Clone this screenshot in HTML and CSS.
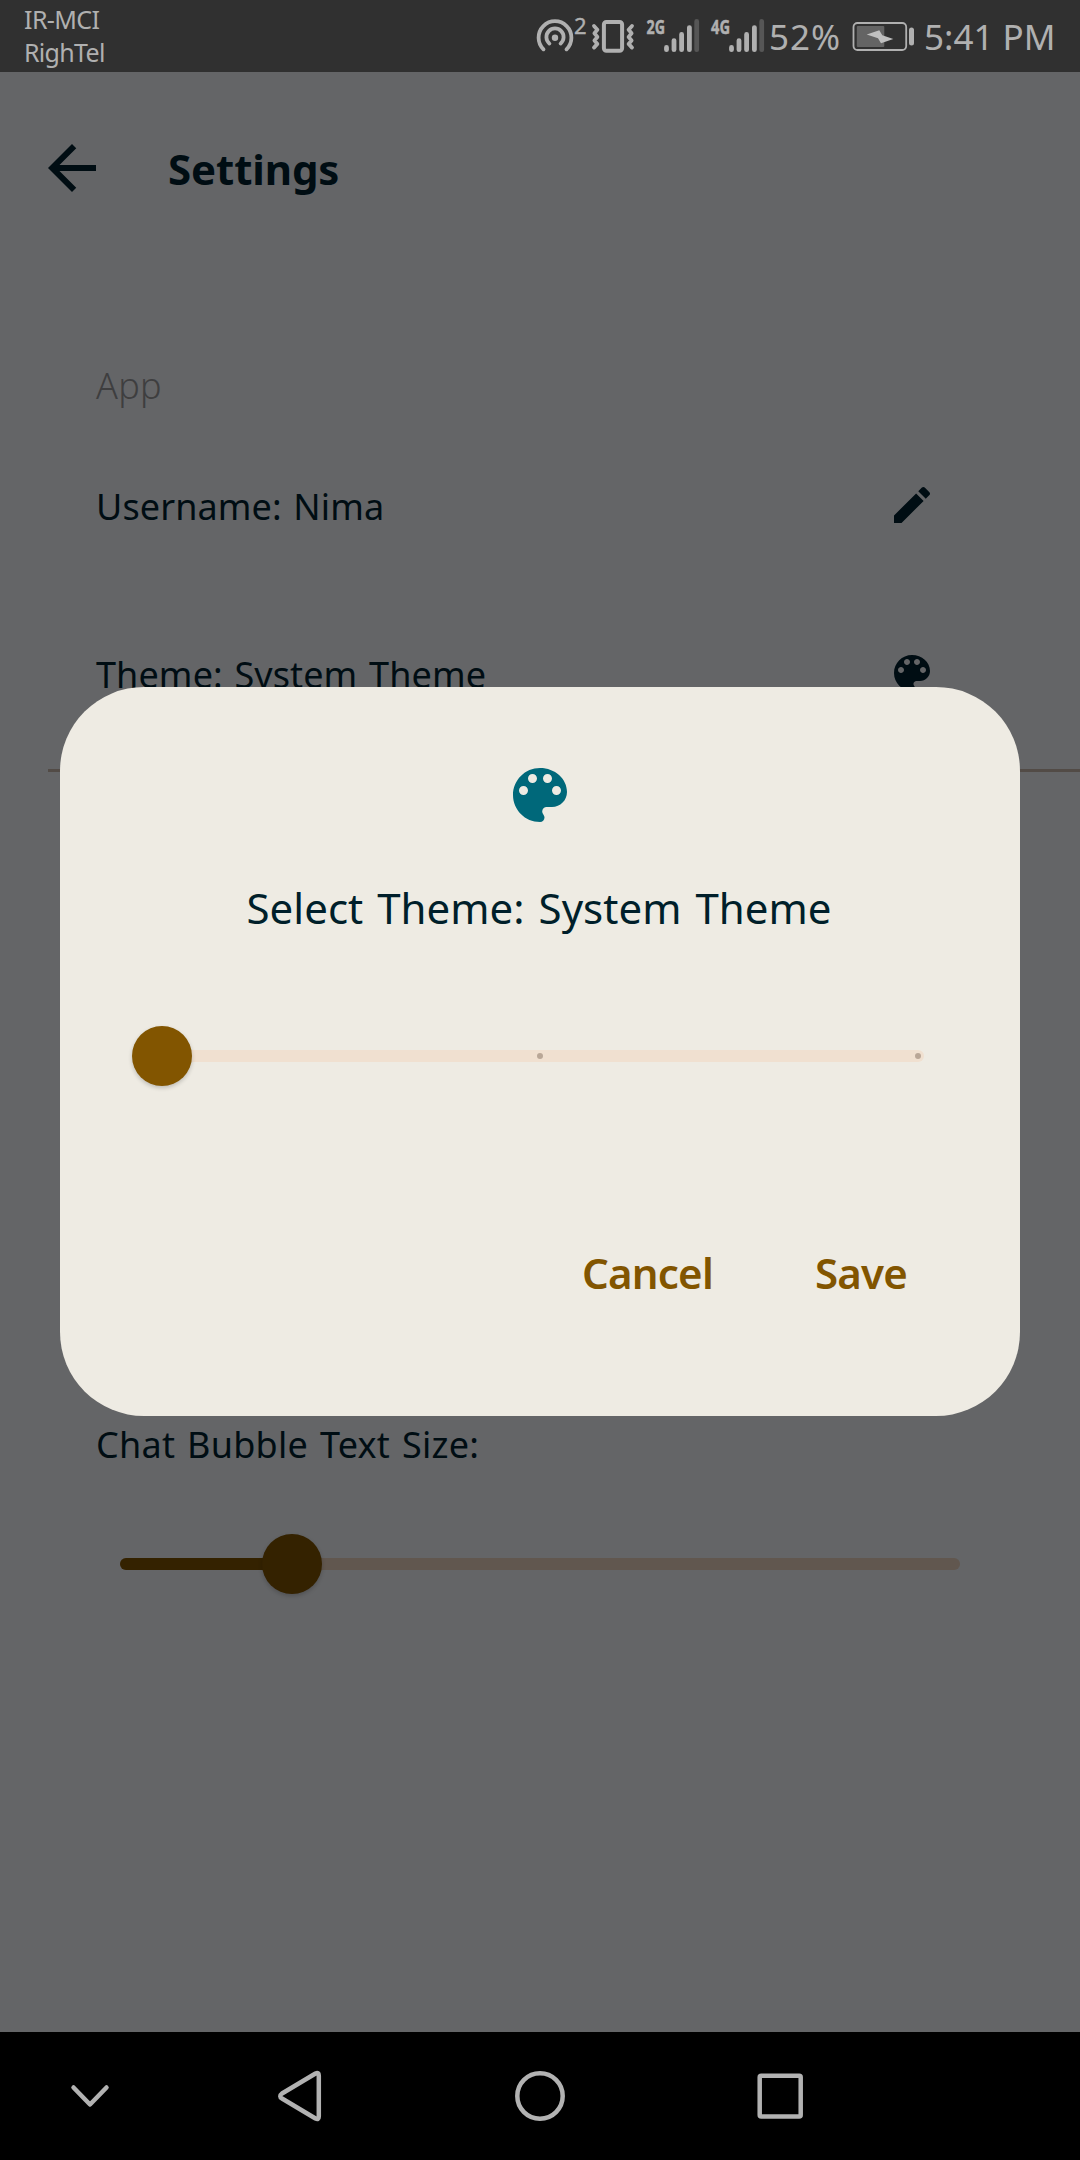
FILE: index.html
```html
<!DOCTYPE html>
<html lang="en">
<head>
<meta charset="utf-8">
<title>Settings</title>
<link rel="stylesheet" href="styles.css">
</head>
<body>
<svg class="defs" width="0" height="0" aria-hidden="true">
  <symbol id="palette" viewBox="0 0 24 24">
    <path d="M12 3c-4.97 0-9 4.03-9 9s4.03 9 9 9c.83 0 1.5-.67 1.5-1.5 0-.39-.15-.74-.39-1.01-.23-.26-.38-.61-.38-.99 0-.83.67-1.5 1.5-1.5H16c2.76 0 5-2.24 5-5 0-4.42-4.03-8-9-8zm-5.5 9c-.83 0-1.5-.67-1.5-1.5S5.67 9 6.5 9 8 9.67 8 10.5 7.33 12 6.5 12zm3-4C8.67 8 8 7.33 8 6.5S8.67 5 9.5 5s1.5.67 1.5 1.5S10.33 8 9.5 8zm5 0c-.83 0-1.5-.67-1.5-1.5S13.67 5 14.5 5s1.5.67 1.5 1.5S15.33 8 14.5 8zm3 4c-.83 0-1.5-.67-1.5-1.5S16.67 9 17.5 9s1.5.67 1.5 1.5-.67 1.5-1.5 1.5z"/>
  </symbol>
</svg>
<div class="screen">
  <header class="status-bar">
    <div class="carriers">
      <span class="carrier">IR-MCI</span>
      <span class="carrier carrier-second">RighTel</span>
    </div>
    <svg class="status-icons" width="239" height="72" viewBox="530 0 239 72">
      <g fill="none" stroke="currentColor" stroke-linecap="round">
        <path stroke-width="3.8" d="M543.5 49.3A16.4 16.4 0 1 1 566.5 49.3"/>
        <path stroke-width="3.8" d="M549.4 43.6A8.6 8.6 0 1 1 560.6 43.6"/>
        <rect x="603.9" y="22" width="18.2" height="28.8" rx="2.5" stroke-width="4"/>
        <path stroke-width="3.8" stroke-linejoin="round" d="M594 26l3.4 3.7-3 3.5 3 3.7-3 3.5 3 3.5-3.4 3.7M632 26l-3.4 3.7 3 3.5-3 3.7 3 3.5-3 3.5 3.4 3.7"/>
      </g>
      <circle cx="555" cy="37.8" r="3.2" fill="currentColor"/>
      <text class="superscript" x="574" y="34">2</text>
      <text class="network" x="646.5" y="33.8" textLength="18.5" lengthAdjust="spacingAndGlyphs">2G</text>
      <text class="network" x="711" y="33.8" textLength="19" lengthAdjust="spacingAndGlyphs">4G</text>
      <g fill="none" stroke="currentColor" stroke-width="4.8" stroke-linecap="round">
        <path d="M666.5 47.4v2.3M674 40.6v9.1M681.6 34.4v15.3M689.4 27.6v22.1"/>
        <path d="M731.5 47.4v2.3M739 40.6v9.1M746.6 34.4v15.3M754.4 27.6v22.1"/>
        <path class="signal-off" d="M696.7 21.4v28.3M761.7 21.4v28.3"/>
      </g>
    </svg>
    <span class="battery-level">52%</span>
    <svg class="battery" width="81" height="72" viewBox="842 0 81 72">
      <rect x="853.5" y="23" width="52.7" height="27" rx="4" fill="none" stroke="currentColor" stroke-width="1.8"/>
      <rect class="battery-fill" x="856.8" y="26" width="27.5" height="21" rx="1"/>
      <path d="M911.5 30v13" stroke="currentColor" stroke-width="5" stroke-linecap="round"/>
      <path class="bolt" d="M866.7 34.6L879.3 30.3 882.3 35.2 893.3 38.9 881 43.3 878 38.2z"/>
    </svg>
    <span class="clock">5:41 PM</span>
  </header>

  <header class="app-bar">
    <svg class="back" width="72" height="72" viewBox="0 0 24 24"><path d="M20 11H7.83l5.59-5.59L12 4l-8 8 8 8 1.41-1.41L7.83 13H20v-2z"/></svg>
    <h1 class="app-title">Settings</h1>
  </header>

  <main class="settings">
    <h2 class="section">App</h2>
    <div class="row">
      <span class="label">Username: Nima</span>
      <svg width="48" height="48" viewBox="0 0 24 24"><path d="M3 17.25V21h3.75L17.81 9.94l-3.75-3.75L3 17.25zM20.71 7.04c.39-.39.39-1.02 0-1.41l-2.34-2.34c-.39-.39-1.02-.39-1.41 0l-1.83 1.83 3.75 3.75 1.83-1.83z"/></svg>
    </div>
    <div class="row">
      <span class="label">Theme: System Theme</span>
      <svg width="48" height="48"><use href="#palette"/></svg>
    </div>
    <div class="divider"></div>
    <section class="text-size">
      <span class="label label-wide">Chat Bubble Text Size:</span>
      <div class="slider slider-dim">
        <div class="slider-active"></div>
        <div class="thumb"></div>
      </div>
    </section>
  </main>

  <nav class="nav-bar">
    <svg width="180" height="128" viewBox="0 0 180 128"><path d="M73.5 55.5L90 72.5l16.5-17"/></svg>
    <svg width="240" height="128" viewBox="180 0 240 128"><path d="M280.2 64Q280 63 282 61.5L315.5 41.5Q318.8 40 318.8 43.5V84.5Q318.8 88 315.5 86.5L282 66.5Q280.2 65.5 280.2 64z"/></svg>
    <svg width="240" height="128" viewBox="420 0 240 128"><circle cx="540" cy="64" r="22.7"/></svg>
    <svg width="240" height="128" viewBox="660 0 240 128"><rect x="759.7" y="43.7" width="41" height="40.8" rx="1.5"/></svg>
  </nav>

  <div class="dialog" role="dialog">
    <svg class="dialog-icon" width="72" height="72"><use href="#palette"/></svg>
    <h2 class="dialog-title">Select Theme: System Theme</h2>
    <div class="slider slider-theme">
      <div class="thumb"></div>
      <i class="tick"></i>
      <i class="tick"></i>
    </div>
    <div class="actions">
      <button class="action">Cancel</button>
      <button class="action">Save</button>
    </div>
  </div>
</div>
</body>
</html>
```
FILE: styles.css
```css
body { margin: 0; background: #646567; }
h1, h2 { margin: 0; }
svg { display: block; flex: none; }
.defs { position: absolute; }

.screen {
  position: relative;
  display: flex;
  flex-direction: column;
  width: 1080px;
  height: 2160px;
  overflow: hidden;
  background: #646567;
  color: #000d13;
  font-family: "Noto Sans", sans-serif;
  white-space: nowrap;
}

/* Status bar */
.status-bar {
  display: flex;
  flex: none;
  height: 72px;
  padding-left: 24px;
  background: #303030;
  color: #b0b0b0;
}
.carriers {
  display: flex;
  flex-direction: column;
  flex: none;
  width: 506px;
  padding-top: 3px;
}
.carrier { font-size: 25px; line-height: 33px; letter-spacing: -0.6px; }
.carrier-second { letter-spacing: -0.7px; }
.battery-level, .clock { flex: none; font-size: 35px; line-height: 73px; }
.battery-level { width: 73px; letter-spacing: 1px; }
.clock { margin-left: 1px; }
.superscript { font-size: 22px; fill: currentColor; stroke: currentColor; stroke-width: 0.4px; }
.network { font-size: 20px; font-weight: 700; fill: currentColor; stroke: currentColor; stroke-width: 0.5px; }
.signal-off { stroke: #565656; }
.battery-fill { fill: #646464; }
.bolt { fill: #c0c0c0; }

/* App bar */
.app-bar {
  display: flex;
  align-items: center;
  flex: none;
  gap: 60px;
  height: 192px;
  padding-left: 36px;
}
.back, .row svg { fill: #000d13; }
.app-title { padding-top: 2px; font-size: 42px; line-height: 60px; font-weight: 700; letter-spacing: -0.1px; }

/* Settings list */
.settings { flex: 1; }
.section {
  height: 60px;
  padding: 97px 96px 0;
  font-size: 36px;
  line-height: 50px;
  font-weight: 300;
  letter-spacing: 0.3px;
  color: #3e3e3f;
}
.row {
  display: flex;
  align-items: center;
  justify-content: space-between;
  height: 168px;
  padding: 0 144px 0 96px;
}
.label {
  padding-top: 4px;
  font-size: 36px;
  line-height: 50px;
  letter-spacing: 0.1px;
  word-spacing: 2.2px;
}
.label-wide { letter-spacing: 0.26px; }
.divider { height: 3px; margin: 12px 0 0 48px; background: #524b46; }
.text-size {
  display: flex;
  flex-direction: column;
  gap: 88px;
  padding: 644px 120px 0 96px;
}

/* Sliders */
.slider {
  display: flex;
  align-items: center;
  height: 12px;
  border-radius: 6px;
}
.thumb {
  flex: none;
  width: 60px;
  height: 60px;
  border-radius: 50%;
  background: #825500;
  box-shadow: 0 2px 4px rgba(0, 0, 0, 0.2);
}
.slider-dim { margin-left: 24px; background: #61574f; }
.slider-dim .thumb { margin-left: -6px; background: #342200; }
.slider-active {
  width: 148px;
  height: 12px;
  border-radius: 6px 0 0 6px;
  background: #342200;
}
.slider-theme {
  gap: 345px;
  width: 792px;
  margin: 112px 0 0 72px;
  background: #f0e0d0;
}
.tick { flex: none; width: 6px; height: 6px; border-radius: 50%; background: #b9a797; }
.tick + .tick { margin-left: 27px; }

/* Theme dialog */
.dialog {
  position: absolute;
  top: 687px;
  left: 60px;
  display: flex;
  flex-direction: column;
  box-sizing: border-box;
  width: 960px;
  height: 729px;
  padding-top: 72px;
  border-radius: 84px;
  background: #eeebe3;
}
.dialog-icon { align-self: center; fill: #00687a; }
.dialog-title {
  margin-top: 47px;
  padding-left: 186.5px;
  font-size: 42px;
  line-height: 60px;
  font-weight: 400;
  letter-spacing: 0.03px;
  word-spacing: 3px;
  color: #001f2a;
}
.actions {
  display: flex;
  justify-content: flex-end;
  gap: 102px;
  margin: 181px 113px 0 0;
}
.action {
  padding: 0;
  border: 0;
  background: none;
  font: 600 42px/60px "Noto Sans", sans-serif;
  letter-spacing: -0.8px;
  color: #825500;
}

/* System navigation */
.nav-bar {
  display: flex;
  flex: none;
  height: 128px;
  background: #000;
}
.nav-bar svg {
  fill: none;
  stroke: #b2b2b2;
  stroke-width: 4.5px;
  stroke-linecap: round;
  stroke-linejoin: round;
}
```
